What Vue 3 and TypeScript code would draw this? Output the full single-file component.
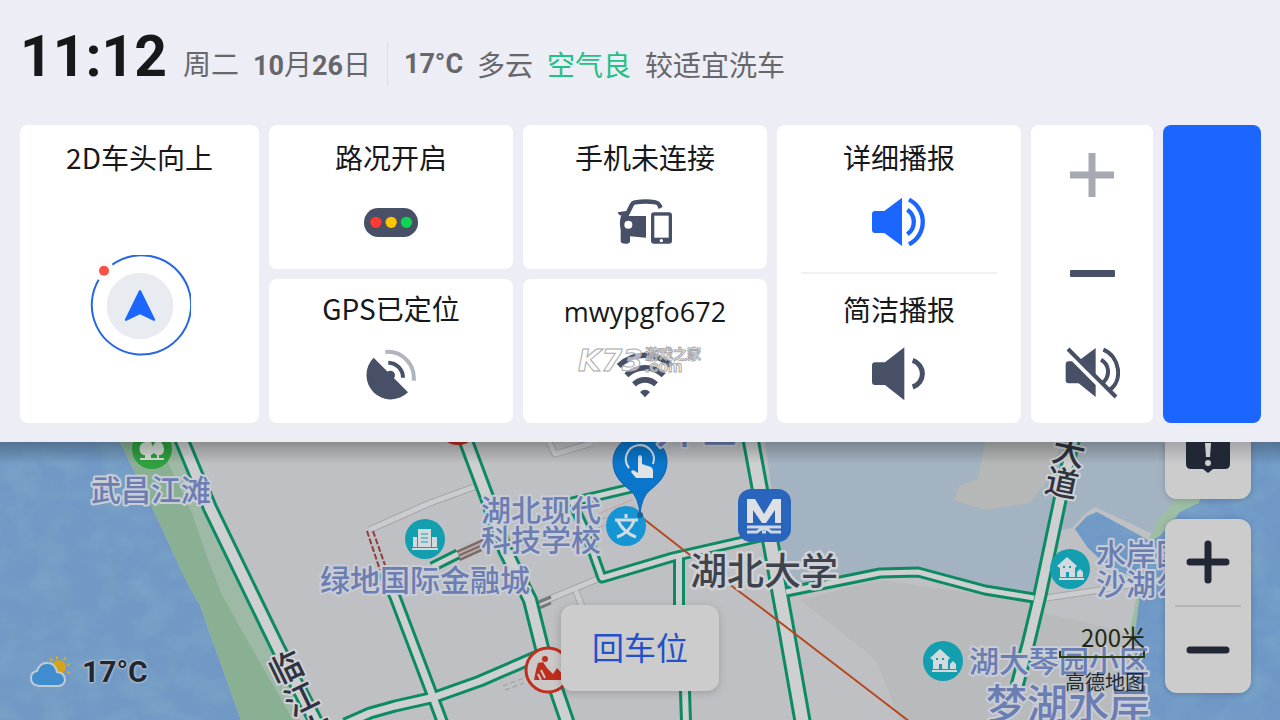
<script setup lang="ts">
interface Poi {
  x: number
  y: number
  size: number
  lines: string[]
  tone: 'place' | 'major'
}

interface Road {
  d: string
  width: number
}

const roads: Road[] = [
  { d: 'M345 724L370 713L395 706L435 697L480 681L540 655', width: 13 },
  { d: 'M384 572L395 597L433 697L443 724', width: 13 },
  { d: 'M432 567L458 554', width: 11 },
  { d: 'M640 486L572 502L585 530L602 578L673 557L765 536', width: 11 },
  { d: 'M679 556L679 605L685 691L686 722', width: 12 },
  { d: 'M786 592L880 573L918 572L985 590L1034 598', width: 11 },
  { d: 'M464 436L488 500L505 550L530 600L542 648L568 724', width: 16 },
  { d: 'M1074 436L1060 500L1040 595L1028 645L1017 686', width: 15 },
  { d: 'M750 436L760 490L771 545L785 622L803 724', width: 18 },
  { d: 'M180 436L210 508L278 648L318 726', width: 16 },
]

const lanes =
  'M474 487L430 503L369 530M549 442L555 454L592 443M600 578L540 603M576 591L584 612M1046 598L1100 590L1160 580'

const homes = [
  { x: 1070, y: 569 },
  { x: 943, y: 661 },
]

const pois: Poi[] = [
  { x: 91, y: 501, size: 30, lines: ['武昌江滩'], tone: 'place' },
  { x: 481, y: 521, size: 30, lines: ['湖北现代', '科技学校'], tone: 'place' },
  { x: 320, y: 591, size: 30, lines: ['绿地国际金融城'], tone: 'place' },
  { x: 1096, y: 565, size: 30, lines: ['水岸国', '沙湖公'], tone: 'place' },
  { x: 969, y: 672, size: 30, lines: ['湖大琴园小区'], tone: 'place' },
  { x: 986, y: 719, size: 41, lines: ['梦湖水岸'], tone: 'place' },
  { x: 656, y: 443, size: 41, lines: ['升世'], tone: 'place' },
  { x: 690, y: 585, size: 37, lines: ['湖北大学'], tone: 'major' },
]
</script>

<template>
  <main class="screen">
    <section class="panel">
      <header class="status">
        <time class="clock">11:12</time>
        <div class="info">
          <span>周二</span>
          <span><b>10</b>月<b>26</b>日</span>
        </div>
        <div class="info weather-info">
          <b>17°C</b>
          <span>多云</span>
          <span class="air">空气良</span>
          <span>较适宜洗车</span>
        </div>
      </header>

      <div class="cards">
        <button class="card tall" type="button">
          <span class="title">2D车头向上</span>
          <svg class="compass" viewBox="267 75 306 306">
            <circle cx="420" cy="228" r="100" fill="#e8ebf0" />
            <path d="M337 104A149 149 0 1 1 296 149" fill="none" stroke="#2767e6" stroke-width="6" />
            <path d="M420 184L462 269L420 249L378 269Z" fill="#1b66ff" stroke="#1b66ff" stroke-width="7" stroke-linejoin="round" />
            <circle cx="312" cy="122" r="15" fill="#fb5147" />
          </svg>
        </button>

        <button class="card" type="button">
          <span class="title">路况开启</span>
          <span class="icon">
            <svg width="54" height="29" viewBox="1091 624 163 87">
              <rect x="1091" y="624" width="163" height="87" rx="43" fill="#475067" />
              <circle cx="1127" cy="667" r="17" fill="#ff3a30" />
              <circle cx="1173" cy="667" r="17" fill="#fdc502" />
              <circle cx="1219" cy="667" r="17" fill="#0bd552" />
            </svg>
          </span>
        </button>

        <button class="card" type="button">
          <span class="title">手机未连接</span>
          <span class="icon">
            <svg width="56" height="46" viewBox="322 60 168 138" fill="#475067">
              <path d="M350 110L366 78Q369 71 376 70Q408 65 438 70Q445 71 449 78L453 87" fill="none" stroke="#475067" stroke-width="13" />
              <path d="M324 100L348 96L354 112H342Q326 110 324 100Z" />
              <path d="M334 111H409V176L361 172V188Q359 194 347 194Q333 194 333 186V152Q328 130 334 111Z" />
              <circle cx="356" cy="137" r="12" fill="#fff" />
              <rect x="424" y="100" width="63" height="94" rx="9" />
              <rect x="434" y="110" width="43" height="66" fill="#fff" />
              <circle cx="455" cy="185" r="5" fill="#fff" />
            </svg>
          </span>
        </button>

        <div class="card tall voice">
          <button type="button" class="option">
            <span class="title">详细播报</span>
            <span class="icon">
              <svg width="54" height="50" viewBox="279 234 162 150">
                <path d="M279 285Q279 276 288 276H316L369 236V381L316 342H288Q279 342 279 333Z" fill="#1b66ff" />
                <path d="M385 272A45 45 0 0 1 385 346M390 242A75 75 0 0 1 390 376" fill="none" stroke="#1b66ff" stroke-width="13" />
              </svg>
            </span>
          </button>
          <hr />
          <button type="button" class="option brief">
            <span class="title">简洁播报</span>
            <span class="icon">
              <svg width="54" height="54" viewBox="277 685 162 162">
                <path d="M277 740Q277 731 286 731H316L374 686V845L316 799H286Q277 799 277 790Z" fill="#475067" />
                <path d="M399 725A42 42 0 0 1 399 805" fill="none" stroke="#475067" stroke-width="15" />
              </svg>
            </span>
          </button>
        </div>

        <div class="card tall volume">
          <button type="button" aria-label="+">
            <svg width="44" height="44" viewBox="0 0 44 44"><path d="M0 22H44M22 0V44" stroke="#a6a9b2" stroke-width="7" /></svg>
          </button>
          <button type="button" aria-label="−">
            <svg width="45" height="7" viewBox="0 0 45 7"><rect width="45" height="7" rx="1" fill="#475067" /></svg>
          </button>
          <button type="button" aria-label="静音">
            <svg width="55" height="52" viewBox="106 683 165 156">
              <path d="M153 720L198 686V765ZM108 735Q108 726 117 726H127L198 797V833L147 792H117Q108 792 108 783Z" fill="#475067" />
              <path d="M115 689L259 833" stroke="#475067" stroke-width="12" />
              <path d="M214 721C240 735 242 770 220 790M221 691C272 712 280 785 240 812" fill="none" stroke="#475067" stroke-width="12" />
            </svg>
          </button>
        </div>

        <div class="level"></div>

        <button class="card gps" type="button">
          <span class="title">GPS已定位</span>
          <span class="icon">
            <svg width="51" height="51" viewBox="1095 357 153 153">
              <path d="M1118 383A72 72 0 1 0 1221 487Z" fill="#475067" />
              <circle cx="1168" cy="436" r="14" fill="#475067" />
              <path d="M1162 398A45 45 0 0 1 1206 443" fill="none" stroke="#475067" stroke-width="12" />
              <path d="M1153 366A78 78 0 0 1 1238 452" fill="none" stroke="#b1b5bf" stroke-width="12" />
            </svg>
          </span>
        </button>

        <button class="card wifi" type="button">
          <span class="title">mwypgfo672</span>
          <span class="icon">
            <svg width="56" height="48" viewBox="320 510 168 144">
              <g fill="none" stroke="#475067" stroke-width="17">
                <path d="M371 613A48 48 0 0 1 437 613" />
                <path d="M348 586A80 80 0 0 1 460 586" />
                <path d="M325 558A113 113 0 0 1 483 558" />
              </g>
              <path d="M404 652L389 636Q404 622 419 636Z" fill="#475067" />
            </svg>
          </span>
          <svg class="mark" width="136" height="34" viewBox="0 0 136 34">
            <text class="mark-logo" x="3" y="27">K73</text>
            <text class="mark-name" x="70" y="15">游戏之家</text>
            <text class="mark-host" x="70" y="28">.com</text>
          </svg>
        </button>
      </div>
    </section>

    <section class="map">
      <svg class="canvas" viewBox="0 442 1280 278" preserveAspectRatio="xMinYMin slice">
        <defs>
          <filter id="ripples" x="0" y="0" width="100%" height="100%" color-interpolation-filters="sRGB">
            <feTurbulence type="fractalNoise" baseFrequency="0.03 0.04" numOctaves="3" seed="4" />
            <feColorMatrix values="0 0 0 0 .5  0 0 0 0 .67  0 0 0 0 .78  2 0 0 0 -.8" />
            <feComposite in2="SourceGraphic" operator="in" />
          </filter>
          <linearGradient id="edge" x1="0" x2="0" y1="0" y2="1">
            <stop offset="0" stop-color="#000" stop-opacity=".26" />
            <stop offset="1" stop-color="#000" stop-opacity="0" />
          </linearGradient>
        </defs>

        <rect y="442" width="1280" height="278" fill="#bfc0c3" />
        <path d="M800 600L880 580L1020 600L1140 590V720H900L876 660Z" fill="#b9babb" />
        <path d="M765 442H1280V530L1165 540L1072 528L1060 532L1034 598L985 590L918 572H880L786 592Z" fill="#a4b3c1" />
        <path d="M985 442L978 479L959 486L954 500L985 510L1030 503L1048 480L1062 442Z" fill="#b6b7b7" />
        <path d="M1060 530L1072 528L1085 514L1095 507L1155 535V640L1034 610Z" fill="#bfc0c3" />
        <path d="M1202 496L1176 500L1158 520L1146 545L1138 590L1130 630L1140 650L1180 540L1206 508Z" fill="#9dbda5" />
        <path d="M1280 442H1212L1199 503L1180 512L1160 536L1150 541L1097 512L1087 516L1075 529L1088 548L1110 568L1142 580L1134 640L1140 720H1280Z" fill="#6f98c7" />
        <path d="M0 442H120L152 507L187 582L200 605L241 720H0Z" fill="#7299c5" />
        <path d="M0 442H120L152 507L187 582L200 605L241 720H0ZM1280 442H1212L1199 503L1180 512L1160 536L1150 541L1097 512L1087 516L1075 529L1088 548L1110 568L1142 580L1134 640L1140 720H1280Z" fill="#fff" filter="url(#ripples)" opacity=".6" />
        <path d="M120 442H180L210 508L278 648L300 720H241L200 605L187 582L152 507Z" fill="#9eb9a5" />
        <path d="M120 442H158L192 513L207 557L222 595L250 645L293 720H241L200 605L187 582L152 507Z" fill="#8ab094" />

        <g fill="none" stroke-linejoin="round">
          <path :d="lanes" stroke="#a4a6aa" stroke-width="7" />
          <path :d="lanes" stroke="#cbccce" stroke-width="5" />
          <path d="M367 531L380 570M373 531L386 568" stroke="#8c3f3a" stroke-width="2" stroke-dasharray="6 2" />
          <path d="M458 556L500 537" stroke="#7c6a66" stroke-width="11" />
          <path d="M458 556L500 537" stroke="#b9aca9" stroke-width="6" />
          <path d="M458 556L500 537" stroke="#7c6a66" stroke-width="2" />
          <path d="M532 605L551 597M535 610L551 603" stroke="#77787a" stroke-width="3" />
          <path d="M503 686L524 678M505 690L524 683" stroke="#999b9e" stroke-width="1" stroke-dasharray="5 3" />
          <path d="M598 514L632 500M600 520L634 506M598 528L620 519" stroke="#c98f8a" stroke-width="1" stroke-dasharray="2 1" />
          <path v-for="road in roads" :key="'e' + road.d" :d="road.d" stroke="#0c8a63" :stroke-width="road.width" />
          <path v-for="road in roads" :key="'f' + road.d" :d="road.d" stroke="#cdcfd0" :stroke-width="road.width - 6" />
          <path d="M640 516L690 555L760 607L880 699L910 722" stroke="#b6481f" stroke-width="2" />
        </g>

        <g>
          <circle cx="152" cy="449" r="20" fill="#2fa040" />
          <path d="M145 442q-7 2-5 10q2 4 5 3v3h-5v2h24v-2h-5v-3q5 0 5-6q0-5-5-9q-6 2-6 8q0 6 4 7v3h-6v-3q4-1 3-6l-3-7Z" fill="#d5dfd6" />
          <circle cx="458" cy="424" r="21" fill="#c32b1c" />
        </g>

        <g>
          <circle cx="425" cy="539" r="20" fill="#139fb0" />
          <path d="M418 529H431V547H418ZM413 537H417V547H413ZM432 537H437V547H432ZM412 548H438V550H412Z" fill="#d3dadd" />
          <path d="M421 534H428M421 538H428M421 542H428" stroke="#139fb0" stroke-width="1" />
        </g>

        <g v-for="home in homes" :key="home.x" :transform="`translate(${home.x} ${home.y})`">
          <circle r="20" fill="#139fb0" />
          <path d="M-13-3L-3-12L7-3L5-1V8H-1V3H-4V8H-10V-1ZM7 8V3L10 0L13 3V8ZM-11 9H14V11H-11Z" fill="#d3dadd" />
          <path d="M-7-2H-5M-1-2H1" stroke="#139fb0" stroke-width="2" />
        </g>

        <g>
          <circle cx="626" cy="526" r="20" fill="#1595d4" />
          <path d="M626 514V518M615 520H638M634 521Q629 533 617 537M618 521Q624 533 636 537" fill="none" stroke="#d2dce2" stroke-width="3" />
        </g>

        <g>
          <path d="M640 436C624 436 613 448 613 462C613 477 624 485 631 491Q638 497 640 513Q642 497 649 491C656 485 667 477 667 462C667 448 656 436 640 436Z" fill="#0a76cb" stroke="#0a61ae" stroke-width="1" />
          <path d="M629 468A14 14 0 1 1 653 464" fill="none" stroke="#d9e0e5" stroke-width="2" />
          <path d="M638 457Q640 453 642 457V464L651 467Q653 468 653 471V478H636L631 472Q632 469 635 471L638 473Z" fill="#e0e4e6" />
          <circle cx="640" cy="515" r="3" fill="#1f5e94" />
        </g>

        <g>
          <rect x="738" y="489" width="53" height="53" rx="13" fill="#2a65bd" />
          <path d="M747 523V499H755L764 514L773 499H781V523H775V510L766 523H762L753 510V523Z" fill="#dde0e5" />
          <path d="M747 527H781M747 532H757Q764 525 771 532H781M762 532H766" fill="none" stroke="#cfd7e2" stroke-width="3" />
        </g>

        <g>
          <circle cx="548" cy="670" r="22" fill="#cbc8c8" stroke="#c02e1e" stroke-width="3" />
          <circle cx="545" cy="659" r="3" fill="#c02e1e" />
          <path d="M534 680L536 670L538 663L543 662L547 668L553 674L557 668L568 680Z" fill="#c02e1e" />
          <path d="M541 670L545 678M538 674L541 680" stroke="#cbc8c8" stroke-width="2" />
        </g>

        <text
          v-for="poi in pois"
          :key="poi.lines[0]"
          :class="['poi', poi.tone]"
          :font-size="poi.size"
        >
          <tspan v-for="(line, i) in poi.lines" :key="line" :x="poi.x" :y="poi.y + i * 30">{{ line }}</tspan>
        </text>

        <g class="street" font-size="33" text-anchor="middle">
          <text transform="translate(286 668) rotate(-26)" dy="12">临</text>
          <text transform="translate(301 699) rotate(-26)" dy="12">江</text>
          <text transform="translate(317 730) rotate(-26)" dy="12">大</text>
          <text transform="translate(1069 452) rotate(12)" dy="12">大</text>
          <text transform="translate(1062 483) rotate(12)" dy="12">道</text>
        </g>

        <rect y="442" width="1280" height="22" fill="url(#edge)" />
      </svg>

      <div class="outside">
        <svg width="42" height="34" viewBox="0 0 42 34">
          <path d="M27 1V4M35 2L34 5M40 9L37 10M40 18L37 17M20 3L22 6" stroke="#d8a82c" stroke-width="2" />
          <circle cx="29" cy="12" r="7" fill="#d6a419" />
          <path d="M9 31Q1 30 1 23Q1 17 7 16Q10 7 18 8Q25 8 27 17Q35 18 35 25Q34 31 28 31Z" fill="#3f8dcf" stroke="#c1cbd6" stroke-width="2" />
        </svg>
        <b>17°C</b>
      </div>

      <button class="recenter" type="button">回车位</button>

      <div class="scale">
        <span class="distance">200米</span>
        <span class="ruler"></span>
        <span class="brand">高德地图</span>
      </div>

      <div class="tools">
        <button class="tool report" type="button" aria-label="上报">
          <svg width="44" height="31" viewBox="0 0 44 31">
            <path d="M0 0H44V22Q44 27 39 27H27L22 31L17 27H5Q0 27 0 22Z" fill="#212734" />
            <path d="M19 1H25L24 15H20Z" fill="#cdced0" />
            <circle cx="22" cy="21" r="3" fill="#cdced0" />
          </svg>
        </button>
        <div class="zoom">
          <button class="tool" type="button" aria-label="放大">
            <svg width="44" height="44" viewBox="0 0 44 44"><path d="M4 22H40M22 4V40" stroke="#212734" stroke-width="7" stroke-linecap="round" /></svg>
          </button>
          <hr />
          <button class="tool" type="button" aria-label="缩小">
            <svg width="44" height="44" viewBox="0 0 44 44"><path d="M4 22H40" stroke="#212734" stroke-width="7" stroke-linecap="round" /></svg>
          </button>
        </div>
      </div>
    </section>
  </main>
</template>

<style>
body {
  margin: 0;
}
</style>

<style scoped>
.screen {
  display: flex;
  flex-direction: column;
  min-height: 100vh;
  font-family: "Noto Sans CJK SC", "Noto Sans", sans-serif;
}

button {
  margin: 0;
  padding: 0;
  border: 0;
  background: none;
  color: inherit;
  font: inherit;
  cursor: pointer;
}

svg {
  display: block;
}

.panel {
  padding: 24px 19px 19px 20px;
  background: #ededf6;
}

.status {
  display: flex;
  align-items: center;
  height: 80px;
  margin-bottom: 21px;
  color: #66676b;
  font-size: 28px;
  line-height: 44px;
  white-space: nowrap;
}

.clock {
  margin-bottom: 14px;
  color: #17181a;
  font: bold 57px/64px Roboto, sans-serif;
}

.info {
  display: flex;
  gap: 14px;
  padding: 0 16px;
}

.info b {
  font-family: Roboto, sans-serif;
  font-size: 27px;
}

.weather-info {
  border-left: 1px solid #dcdce4;
}

.air {
  color: #21c285;
}

.cards {
  display: grid;
  grid-template-columns: 239fr 244fr 244fr 244fr 122fr 98fr;
  grid-template-rows: 144px 144px;
  gap: 10px;
}

.card {
  position: relative;
  display: flex;
  flex-direction: column;
  align-items: center;
  border-radius: 8px;
  background: #fff;
}

button.card,
.option {
  justify-content: flex-start;
  padding-top: 12px;
}

.tall,
.level {
  grid-row: span 2;
}

.level {
  border-radius: 8px;
  background: #1b66ff;
}

.title {
  color: #17181a;
  font-size: 28px;
  line-height: 40px;
}

.icon {
  display: flex;
  align-items: center;
  justify-content: center;
  height: 54px;
  margin-top: 18px;
}

.gps .title {
  line-height: 34px;
}

.gps .icon {
  margin-top: 22px;
}

.wifi .title {
  font-family: "Open Sans", sans-serif;
  font-size: 27px;
  line-height: 42px;
}

.wifi .icon {
  margin-top: 14px;
}

.compass {
  width: 102px;
  height: 102px;
  margin-top: 78px;
}

.voice {
  align-items: stretch;
}

.option {
  display: flex;
  flex: 1;
  flex-direction: column;
  align-items: center;
}

.brief {
  padding-top: 15px;
}

.voice hr {
  height: 2px;
  margin: 0 24px;
  border: 0;
  background: #f1f1f3;
}

.volume button {
  display: flex;
  flex: 1;
  align-items: center;
  justify-content: center;
  width: 100%;
}

.mark {
  position: absolute;
  top: 65px;
  left: 52px;
  fill: #fff;
  fill-opacity: 0.6;
  stroke: #a9a9ab;
  stroke-width: 1;
}

.mark-logo {
  font: italic bold 30px "DejaVu Sans", sans-serif;
}

.mark-name {
  font: bold 14px "Noto Sans CJK SC", sans-serif;
}

.mark-host {
  font: bold 16px "Liberation Sans", sans-serif;
}

.map {
  position: relative;
  flex: 1;
  min-height: 278px;
  overflow: hidden;
}

.canvas {
  position: absolute;
  width: 100%;
  height: 100%;
}

.poi,
.street {
  font-weight: 500;
  paint-order: stroke;
  stroke-linejoin: round;
}

.place {
  fill: #6c7db2;
  stroke: #c8cdd6;
  stroke-width: 4px;
}

.major {
  fill: #3e434e;
  stroke: #cfd1d4;
  stroke-width: 5px;
}

.street {
  fill: #2f3440;
  stroke: #cfd1d4;
  stroke-width: 4px;
}

.outside {
  position: absolute;
  bottom: 30px;
  left: 30px;
  display: flex;
  align-items: center;
  gap: 10px;
  color: #22262f;
  font: 30px/36px Roboto, sans-serif;
  text-shadow: 0 0 2px #c5ccd6, 0 0 2px #c5ccd6, 0 0 3px #c5ccd6;
}

.recenter {
  position: absolute;
  bottom: 29px;
  left: 50%;
  padding: 17px 31px 21px;
  border-radius: 12px;
  background: #cccccd;
  box-shadow: 0 2px 8px rgba(0, 0, 0, 0.18);
  color: #2450c9;
  font-size: 32px;
  line-height: 48px;
  transform: translateX(-50%);
}

.scale {
  position: absolute;
  right: 135px;
  bottom: 25px;
  display: flex;
  flex-direction: column;
  align-items: flex-end;
  color: #1f2a14;
}

.distance {
  font-size: 24px;
  line-height: 28px;
}

.ruler {
  width: 82px;
  height: 5px;
  border: 2px solid #263c10;
  border-top: 0;
}

.brand {
  margin-top: 11px;
  color: #202a33;
  font-size: 20px;
  line-height: 26px;
}

.tools {
  position: absolute;
  top: 0;
  right: 29px;
  display: flex;
  flex-direction: column;
  gap: 20px;
  width: 86px;
}

.tool {
  display: flex;
  align-items: center;
  justify-content: center;
  height: 86px;
  width: 100%;
}

.report,
.zoom {
  border-radius: 12px;
  background: #cccccd;
  box-shadow: 0 1px 6px rgba(0, 0, 0, 0.2);
}

.report {
  align-items: flex-start;
  height: 57px;
  border-radius: 0 0 12px 12px;
  background: linear-gradient(#a5a5a7, #cccccd 22px);
}

.zoom hr {
  height: 2px;
  margin: 0 10px;
  border: 0;
  background: #b2b3b5;
}
</style>
